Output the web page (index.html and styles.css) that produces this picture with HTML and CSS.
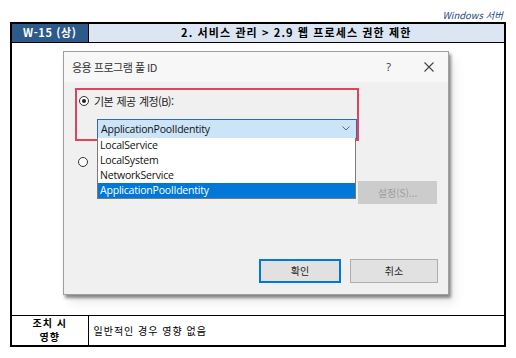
FILE: index.html
```html
<!DOCTYPE html>
<html lang="ko">
<head>
    <meta charset="UTF-8">
    <title>W-15 웹 프로세스 권한 제한</title>
    <link rel="stylesheet" href="styles.css">
</head>
<body>
    <div class="page">
        <div class="os">Windows 서버</div>
        <table class="sheet">
            <tr class="head">
                <th class="code">W-15 (상)</th>
                <th class="title">2. 서비스 관리 &gt; 2.9 웹 프로세스 권한 제한</th>
            </tr>
            <tr>
                <td colspan="2" class="shot">
                    <div class="dialog">
                        <div class="dlg-title">
                            <span class="dlg-name">응용 프로그램 풀 ID</span>
                            <span class="dlg-help">?</span>
                            <svg class="dlg-close" width="10" height="10" viewBox="0 0 10 10">
                                <path d="M0.5 0.5 L9.5 9.5 M9.5 0.5 L0.5 9.5" stroke="#444" stroke-width="1.1" fill="none"/>
                            </svg>
                        </div>
                        <div class="dlg-body">
                            <div class="mark">
                                <div class="opt"><span class="radio on"></span>기본 제공 계정(B):</div>
                                <div class="select">
                                    <span class="value">ApplicationPoolIdentity</span>
                                    <svg width="8" height="5" viewBox="0 0 8 5">
                                        <path d="M0.5 0.5 L4 4 L7.5 0.5" stroke="#666" stroke-width="1" fill="none"/>
                                    </svg>
                                    <ul class="list">
                                        <li>LocalService</li>
                                        <li>LocalSystem</li>
                                        <li>NetworkService</li>
                                        <li class="sel">ApplicationPoolIdentity</li>
                                    </ul>
                                </div>
                            </div>
                            <div class="opt2"><span class="radio"></span></div>
                            <div class="setrow"><button class="btn set">설정(S)...</button></div>
                            <div class="actions">
                                <button class="btn ok">확인</button>
                                <button class="btn cancel">취소</button>
                            </div>
                        </div>
                    </div>
                </td>
            </tr>
            <tr class="foot">
                <th class="label">조치 시<br>영향</th>
                <td class="note">일반적인 경우 영향 없음</td>
            </tr>
        </table>
    </div>
</body>
</html>
```

FILE: styles.css
```css
* {
    margin: 0;
    padding: 0;
    box-sizing: border-box;
}

body {
    font-family: "Noto Sans CJK KR", "Noto Sans", sans-serif;
    background: #fff;
    color: #000;
}

.page {
    padding: 8px 10px 0 10px;
}

.os {
    height: 14px;
    line-height: 14px;
    text-align: right;
    padding-right: 3px;
    font-size: 9.5px;
    font-style: italic;
    color: #1f497d;
}

.sheet {
    width: 496px;
    border-collapse: collapse;
    border: 2px solid #000;
}

.sheet th,
.sheet td {
    border: 1px solid #000;
}

.head th {
    height: 19px;
    font-size: 11px;
    font-weight: bold;
    line-height: 17px;
}

.code {
    width: 77px;
    background: #2c5a8b;
    color: #fff;
    letter-spacing: 0.6px;
}

.title {
    background: #dce6f2;
    letter-spacing: 1.1px;
}

.shot {
    height: 273px;
    padding: 8px 0 0 51px;
    vertical-align: top;
}

/* captured dialog */
.dialog {
    width: 386px;
    height: 244px;
    background: #f0f0f0;
    border: 1px solid #a0a0a0;
    box-shadow: 2px 3px 3px rgba(0, 0, 0, 0.45), 6px 8px 10px rgba(0, 0, 0, 0.08);
}

.dlg-title {
    height: 30px;
    display: flex;
    align-items: center;
    padding: 0 14px 0 8px;
    background: #f7f7f7;
    font-size: 11px;
    color: #333;
}

.dlg-name {
    flex: 1;
    letter-spacing: -0.5px;
}

.dlg-help {
    margin-right: 33px;
    font-family: "Open Sans", sans-serif;
}

.dlg-body {
    padding: 6px 0 0 11px;
}

.mark {
    width: 284px;
    height: 53px;
    border: 2px solid #e0445a;
}

.opt {
    height: 22px;
    display: flex;
    align-items: center;
    gap: 5px;
    padding-left: 2px;
    font-size: 11px;
    letter-spacing: -0.6px;
    word-spacing: 1px;
    color: #222;
}

.radio {
    position: relative;
    width: 10px;
    height: 10px;
    border: 1px solid #333;
    border-radius: 50%;
    background: #fff;
}

.radio.on::after {
    content: "";
    position: absolute;
    top: 2px;
    left: 2px;
    width: 4px;
    height: 4px;
    border-radius: 50%;
    background: #222;
}

.select {
    position: relative;
    height: 20px;
    margin: 7px 0 0 20px;
    display: flex;
    align-items: center;
    padding: 0 6px 0 3px;
    background: #cce4f7;
    border: 1px solid #2b6cb0;
    font-family: "Open Sans", sans-serif;
    font-size: 10.5px;
    letter-spacing: -0.2px;
    color: #111;
}

.value {
    flex: 1;
}

.list {
    position: absolute;
    top: 100%;
    left: -1px;
    right: 0;
    list-style: none;
    background: #fff;
    border: 1px solid #7a7a7a;
    border-top: none;
    z-index: 2;
}

.list li {
    height: 15px;
    line-height: 15px;
    padding-left: 2px;
}

.list .sel {
    background: #0078d7;
    color: #fff;
}

.opt2 {
    margin-top: 16px;
    height: 10px;
    padding-left: 3px;
    display: flex;
}

.setrow {
    margin-top: 11px;
    padding-left: 283px;
}

.btn {
    height: 23px;
    font-family: "Noto Sans CJK KR", sans-serif;
    font-size: 10px;
    background: #e1e1e1;
    border: 1px solid #adadad;
    color: #222;
}

.set {
    width: 79px;
    background: #cccccc;
    border-color: #cccccc;
    color: #9e9e9e;
}

.actions {
    margin-top: 55px;
    padding-left: 184px;
    display: flex;
    gap: 9px;
}

.ok {
    width: 82px;
    height: 24px;
    border: 2px solid #0078d7;
}

.cancel {
    width: 88px;
    height: 24px;
}

.foot th,
.foot td {
    height: 29px;
    font-size: 10px;
}

.label {
    padding: 0;
    line-height: 14.5px;
    font-weight: bold;
    letter-spacing: 1px;
}

.note {
    padding-left: 5px;
    font-size: 10.5px;
    letter-spacing: 1px;
}
```
